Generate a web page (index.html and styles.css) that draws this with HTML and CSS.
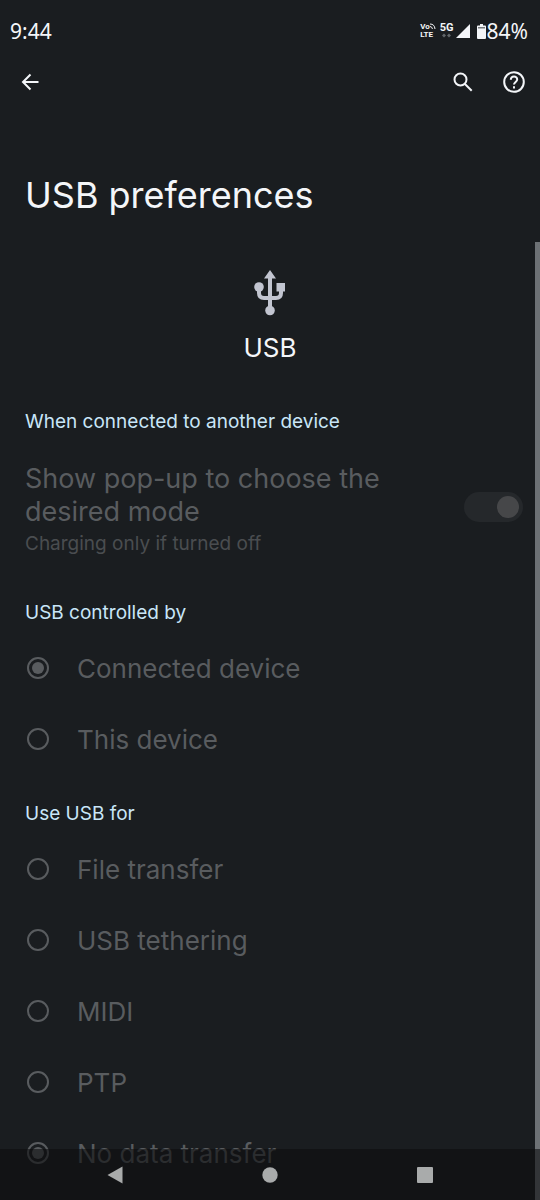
FILE: index.html
```
<!DOCTYPE html>
<html lang="en">
<head>
  <meta charset="UTF-8">
  <meta name="viewport" content="width=device-width, initial-scale=1.0">
  <title>USB preferences</title>
  <link rel="stylesheet" href="styles.css">
</head>
<body>
  <div class="status-bar">
    <span class="clock">9:44</span>
    <div class="status-icons">
      <div class="volte">
        <span class="vo">Vo<svg width="6" height="6" viewBox="0 0 6 6"><path d="M0 1q4.500 0 5 5M0 3.500q2 0 2.500 2.500" /></svg></span>
        <span>LTE</span>
      </div>
      <div class="network">
        <span>5G</span>
        <svg width="10" height="5" viewBox="0 0 10 5"><path d="M0 2.500L2 .5l2 2-2 2zM5 2.500l2-2 2 2-2 2z" /></svg>
      </div>
      <svg class="signal" width="14" height="14" viewBox="0 0 14 14"><path d="M14 0v14H0z" /></svg>
      <svg class="battery" width="9" height="15" viewBox="0 0 9 15"><path d="M3 0h3v1.500h2q1 0 1 1V14q0 1-1 1H1q-1 0-1-1V2.500q0-1 1-1h2z" /><path class="battery-gap" d="M1 3h7v1.500H1z" /></svg>
      <span class="percent">84%</span>
    </div>
  </div>

  <header class="toolbar">
    <button type="button" class="icon-btn" aria-label="Back">
      <svg width="18" height="18" viewBox="0 0 18 18"><path d="M17.500 9H2M9.500 1.500L2 9l7.500 7.500" /></svg>
    </button>
    <div class="actions">
      <button type="button" class="icon-btn" aria-label="Search">
        <svg width="20" height="20" viewBox="0 0 20 20"><circle cx="7.500" cy="7.500" r="6" /><path d="M11.700 11.700L18.700 18.700" /></svg>
      </button>
      <button type="button" class="icon-btn" aria-label="Help">
        <svg width="24" height="24" viewBox="0 0 24 24"><circle cx="12" cy="12" r="9.800" /><path d="M8.800 9.800c0-4.400 6.400-4.400 6.400-.3 0 2.300-3.200 2.600-3.200 5" /><path d="M12 16.200v2.200" /></svg>
      </button>
    </div>
  </header>

  <main>
    <h1>USB preferences</h1>

    <div class="device">
      <svg width="32" height="46" viewBox="0 0 32 46">
        <path class="usb-line" d="M16 8v32M5 17v6q0 5 5 5h12q5 0 5-5v-6" />
        <path d="M16 0l6 8.500H10zM22.500 13H31v8.500h-8.500z" />
        <circle cx="5" cy="17" r="4.800" />
        <circle cx="16" cy="40.500" r="4.800" />
      </svg>
      <p>USB</p>
    </div>

    <section>
      <h2>When connected to another device</h2>
      <label class="switch-row">
        <span class="switch-text">
          <span class="row-title">Show pop-up to choose the desired mode</span>
          <span class="summary">Charging only if turned off</span>
        </span>
        <input type="checkbox" class="switch" role="switch" checked disabled>
      </label>
    </section>

    <section>
      <h2>USB controlled by</h2>
      <label class="radio-row"><input type="radio" name="control" checked disabled> <span>Connected device</span></label>
      <label class="radio-row"><input type="radio" name="control" disabled> <span>This device</span></label>
    </section>

    <section>
      <h2>Use USB for</h2>
      <label class="radio-row"><input type="radio" name="mode" disabled> <span>File transfer</span></label>
      <label class="radio-row"><input type="radio" name="mode" disabled> <span>USB tethering</span></label>
      <label class="radio-row"><input type="radio" name="mode" disabled> <span>MIDI</span></label>
      <label class="radio-row"><input type="radio" name="mode" disabled> <span>PTP</span></label>
      <label class="radio-row"><input type="radio" name="mode" checked disabled> <span>No data transfer</span></label>
    </section>
  </main>

  <div class="scroll-thumb"></div>

  <nav class="nav-bar">
    <button type="button" aria-label="Back">
      <svg width="18" height="18" viewBox="0 0 18 18"><path d="M16.500 .5v17L1.500 9z" /></svg>
    </button>
    <button type="button" aria-label="Home">
      <svg width="18" height="18" viewBox="0 0 18 18"><circle cx="9" cy="9" r="7.700" /></svg>
    </button>
    <button type="button" aria-label="Recent apps">
      <svg width="18" height="18" viewBox="0 0 18 18"><rect x="1" y="1" width="16" height="16" rx="1" /></svg>
    </button>
  </nav>
</body>
</html>
```
FILE: styles.css
```
* {
  box-sizing: border-box;
}

body {
  margin: 0;
  min-height: 100vh;
  position: relative;
  background-color: #1a1d20;
  color: #f4f6f9;
  font-family: Inter, sans-serif;
}

button {
  display: flex;
  align-items: center;
  justify-content: center;
  padding: 0;
  border: none;
  background: none;
}

svg {
  display: block;
  fill: currentColor;
}

.status-bar {
  display: flex;
  justify-content: space-between;
  align-items: center;
  height: 62px;
  padding: 0 12px 0 10px;
  font-family: "Noto Sans", sans-serif;
  font-size: 21px;
}

.status-icons {
  display: flex;
  align-items: center;
}

.volte,
.network {
  font-family: Roboto, sans-serif;
  font-weight: 700;
  line-height: 8px;
}

.volte {
  display: flex;
  flex-direction: column;
  margin-right: 4px;
  font-size: 8px;
}

.vo {
  display: flex;
}

.vo path {
  fill: none;
  stroke: currentColor;
}

.network {
  font-size: 11px;
  margin-right: 2px;
}

.network svg {
  margin: 1px 0 0 2px;
  color: #62666a;
}

.battery {
  margin: 0 1px 0 7px;
}

.battery-gap {
  fill: #777a7d;
}

.toolbar {
  display: flex;
  justify-content: space-between;
  align-items: center;
  height: 40px;
  padding: 0 14px;
}

.icon-btn {
  width: 32px;
  height: 32px;
  color: #f4f6f9;
}

.icon-btn svg {
  fill: none;
  stroke: currentColor;
  stroke-width: 2;
}

.actions {
  display: flex;
  gap: 19px;
  margin-right: -4px;
}

h1 {
  margin: 69px 25px 0;
  font-size: 36px;
  line-height: 48px;
  font-weight: 400;
}

.device {
  display: flex;
  flex-direction: column;
  align-items: center;
  padding: 51px 0 36px;
}

.device svg {
  color: #c2c5d0;
}

.usb-line {
  fill: none;
  stroke: currentColor;
  stroke-width: 4;
}

.device p {
  margin: 15px 0 0;
  font-size: 26px;
  line-height: 34px;
}

section {
  padding: 0 17px 19px 25px;
}

section:last-child {
  padding-bottom: 12px;
}

h2 {
  margin: 0;
  padding-top: 2px;
  color: #c9e6f8;
  font-size: 19px;
  line-height: 38px;
  font-weight: 400;
}

.switch-row {
  display: flex;
  justify-content: space-between;
  align-items: center;
  height: 132px;
  color: #595c5f;
}

.switch-text {
  width: 384px;
  padding-top: 7px;
}

.row-title,
.summary {
  display: block;
}

.row-title {
  font-size: 27px;
  line-height: 33px;
}

.summary {
  color: #4a4d50;
  font-size: 19px;
  line-height: 31px;
}

.switch {
  appearance: none;
  flex: none;
  width: 59px;
  height: 30px;
  margin: 0;
  padding: 4px;
  border-radius: 15px;
  background-color: #25282b;
}

.switch::before {
  content: "";
  display: block;
  width: 22px;
  height: 22px;
  border-radius: 50%;
  background-color: #464749;
}

.switch:checked::before {
  margin-left: auto;
}

.radio-row {
  display: flex;
  align-items: center;
  gap: 28px;
  height: 71px;
  color: #595c5f;
  font-size: 26px;
}

.radio-row span {
  padding-top: 2px;
}

.radio-row input {
  appearance: none;
  display: grid;
  place-items: center;
  width: 22px;
  height: 22px;
  margin: 0 0 0 2px;
  border: 2px solid #595c5f;
  border-radius: 50%;
}

.radio-row input:checked::before {
  content: "";
  width: 12px;
  height: 12px;
  border-radius: 50%;
  background-color: #595c5f;
}

.scroll-thumb {
  position: absolute;
  top: 242px;
  right: 0;
  bottom: 0;
  width: 5px;
  background-color: #6d7175;
}

.nav-bar {
  position: fixed;
  left: 0;
  right: 0;
  bottom: 0;
  display: flex;
  justify-content: space-around;
  height: 51px;
  padding: 0 37px;
  background-color: rgba(14, 14, 15, 0.6);
}

.nav-bar button {
  width: 48px;
  color: #a9abab;
}
```
